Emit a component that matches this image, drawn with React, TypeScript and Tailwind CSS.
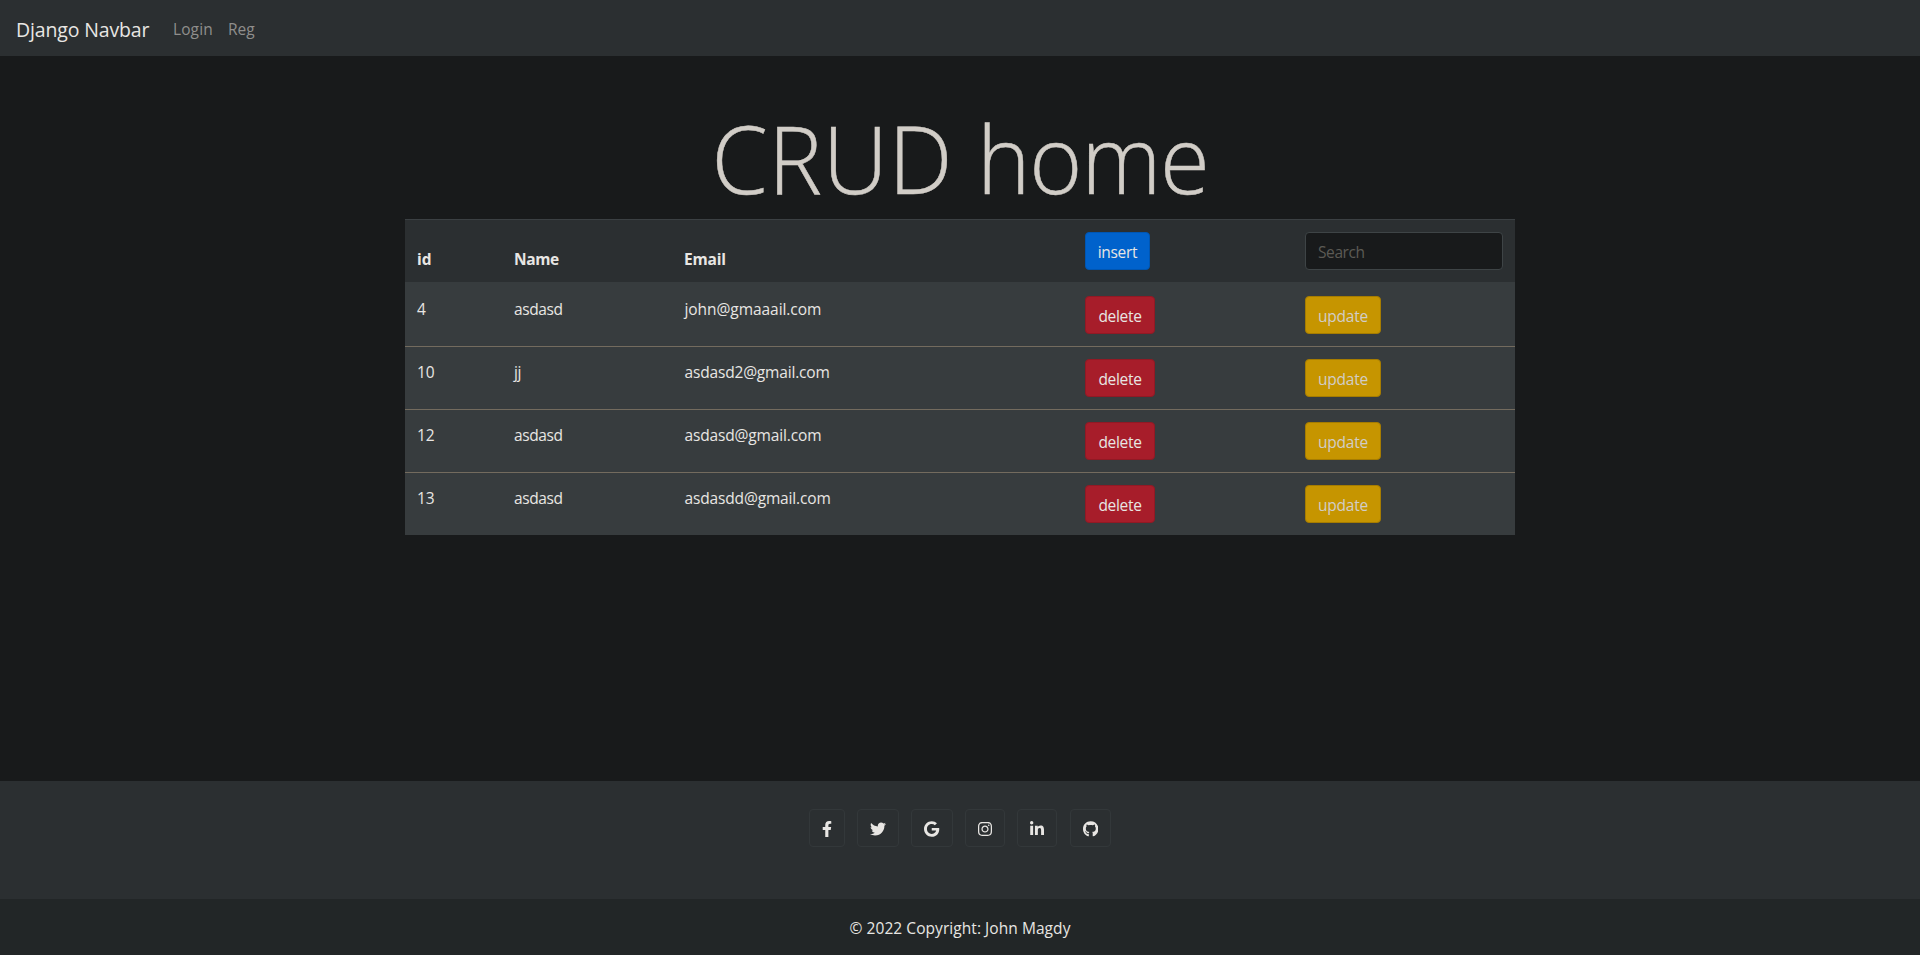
import React from 'react';
import { FaFacebookF, FaTwitter, FaGoogle, FaInstagram, FaLinkedinIn, FaGithub } from 'react-icons/fa';

const rows = [
  { id: '4', name: 'asdasd', email: 'john@gmaaail.com', track: 'tracking-[-0.06px]' },
  { id: '10', name: 'jj', email: 'asdasd2@gmail.com', track: 'tracking-[-0.17px]' },
  { id: '12', name: 'asdasd', email: 'asdasd@gmail.com', track: 'tracking-[-0.15px]' },
  { id: '13', name: 'asdasd', email: 'asdasdd@gmail.com', track: 'tracking-[-0.15px]' },
];

const socials = [
  { label: 'Facebook', Icon: FaFacebookF, size: 'w-[10px]' },
  { label: 'Twitter', Icon: FaTwitter, size: 'w-4' },
  { label: 'Google', Icon: FaGoogle, size: 'w-[15.25px]' },
  { label: 'Instagram', Icon: FaInstagram, size: 'w-[14px]' },
  { label: 'LinkedIn', Icon: FaLinkedinIn, size: 'w-[14px]' },
  { label: 'GitHub', Icon: FaGithub, size: 'w-[15.5px]' },
];

const grid = 'grid grid-cols-[97px_170px_401px_220px_222px]';
const button = 'h-[38px] rounded border pt-0.5 text-center leading-6 whitespace-nowrap';

export default function App() {
  return (
    <div className="flex h-[955px] flex-col overflow-hidden bg-[#181a1b] font-['Open_Sans','Noto_Sans',sans-serif] text-[15.5px] leading-6 text-[#e8e6e3]">
      <nav className="flex h-14 shrink-0 items-center bg-[#2b2f31] px-4 pt-[3px]">
        <a className="w-[149px] text-[19.5px] leading-[30px] tracking-[-0.15px]">Django Navbar</a>
        <div className="flex gap-4 pb-0.5 pl-2 text-[#8f8e8c]">
          <a className="w-[39px] tracking-[0.1px]">Login</a>
          <a>Reg</a>
        </div>
      </nav>

      <main className="mx-auto w-[1110px] flex-1">
        <h1 className="mt-[45px] mb-[3px] h-[115px] scale-x-[0.964] text-center text-[94px] leading-[115px] font-light whitespace-nowrap text-[#d1cdc7] [-webkit-text-stroke:0.5px_#d1cdc7]">
          <span className="tracking-[0.6px]">CRUD </span>
          <span className="tracking-[-1.3px]">home</span>
        </h1>
        <div className={`${grid} h-[63px] border-t border-[#3b4043] bg-[#2b2f31] font-bold`}>
          <div className="px-3 pt-[27px]">id</div>
          <div className="px-3 pt-[27px] tracking-[-0.4px]">Name</div>
          <div className="px-3 pt-[27px] tracking-[-0.2px]">Email</div>
          <div className="p-3">
            <button className={`${button} w-[65px] border-[#0056b3] bg-[#0062cc] font-normal tracking-[-0.3px]`}>insert</button>
          </div>
          <div className="p-3">
            <input
              placeholder="Search"
              className="block h-[38px] w-full rounded border border-[#3e4446] bg-[#181a1b] px-3 pt-0.5 font-normal tracking-[-0.4px] outline-none placeholder:text-[#5c5a55]"
            />
          </div>
        </div>
        {rows.map((row, i) => (
          <div
            key={row.id}
            className={`${grid} bg-[#373c3e] ${i === 0 ? 'h-16 border-t-2 border-[#373c3e]' : 'h-[63px] border-t border-[#736b5e]'}`}
          >
            <div className="px-3 pt-[13px]">{row.id}</div>
            <div className="px-3 pt-[13px] tracking-[-0.4px]">{row.name}</div>
            <div className={`pl-[12.5px] pt-[13px] ${row.track}`}>{row.email}</div>
            <div className="p-3">
              <button className={`${button} w-[70px] border-[#911924] bg-[#a71d2a] tracking-[-0.3px]`}>delete</button>
            </div>
            <div className="p-3">
              <button className={`${button} w-[76px] border-[#a67c00] bg-[#c69500] tracking-[-0.25px] text-[#d1cdc7]`}>update</button>
            </div>
          </div>
        ))}
      </main>

      <footer className="h-[174px] shrink-0 bg-[#2b2f31]">
        <div className="flex h-[118px] justify-center gap-[12.4px] pt-7">
          {socials.map(({ label, Icon, size }) => (
            <a key={label} aria-label={label} className="flex h-[38px] items-center rounded border border-[#33383a] px-3 pt-0.5">
              <Icon className={`h-4 ${size}`} />
            </a>
          ))}
        </div>
        <div className="h-14 bg-[#222627] pt-[17px] text-center tracking-[0.06px]">© 2022 Copyright: John Magdy</div>
      </footer>
    </div>
  );
}
